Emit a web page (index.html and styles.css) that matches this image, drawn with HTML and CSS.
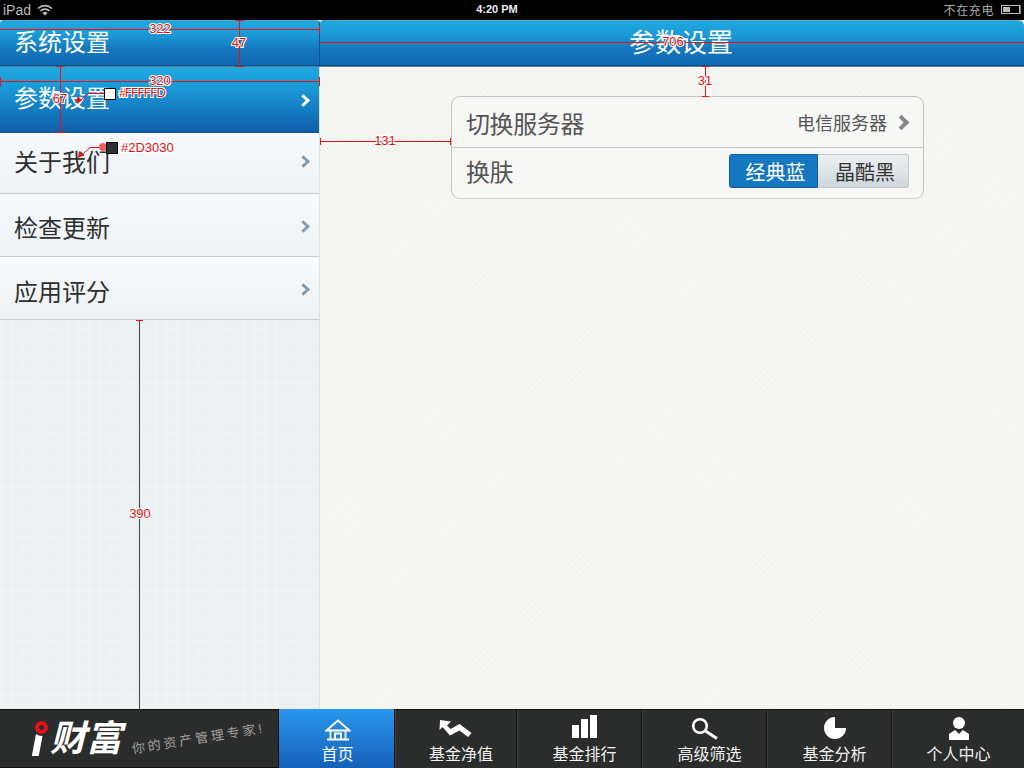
FILE: index.html
```html
<!DOCTYPE html>
<html lang="zh-CN">
<head>
    <meta charset="UTF-8">
    <title>参数设置</title>
    <link rel="stylesheet" href="styles.css">
</head>
<body>
<div class="status-bar">
    <div class="status-left">
        <span>iPad</span>
        <svg class="wifi" width="16" height="12" viewBox="0 0 16 12">
            <path d="M1 4.500a10 10 0 0 1 14 0M3.400 7a6.600 6.600 0 0 1 9.200 0" fill="none" stroke="#bbb" stroke-width="1.600"/>
            <path d="M5.400 9a3.600 3.600 0 0 1 5.200 0L8 11.600z" fill="#bbb"/>
        </svg>
    </div>
    <div class="status-time">4:20 PM</div>
    <div class="status-right">
        <span>不在充电</span>
        <span class="battery"><span class="battery-level"></span></span>
    </div>
</div>

<div class="app">
    <div class="sidebar">
        <div class="bar bar-left">系统设置</div>
        <ul class="menu">
            <li class="menu-item active">参数设置<span class="chevron"></span></li>
            <li class="menu-item">关于我们<span class="chevron"></span></li>
            <li class="menu-item">检查更新<span class="chevron"></span></li>
            <li class="menu-item">应用评分<span class="chevron"></span></li>
        </ul>
    </div>
    <div class="content">
        <div class="bar bar-right">参数设置</div>
        <div class="panel">
            <div class="row row-server">
                <span class="row-title">切换服务器</span>
                <span class="row-value">电信服务器<span class="chevron chevron-grey"></span></span>
            </div>
            <div class="row row-skin">
                <span class="row-title">换肤</span>
                <div class="segment">
                    <span class="segment-item selected">经典蓝</span>
                    <span class="segment-item">晶酷黑</span>
                </div>
            </div>
        </div>
    </div>
</div>

<div class="tabbar">
    <div class="logo">
        <span class="logo-i">i</span>
        <span class="logo-mark">财富</span>
        <span class="logo-dot"></span>
        <span class="logo-slogan">你的资产管理专家!</span>
    </div>
    <div class="tab tab-home">
        <svg width="26" height="22" viewBox="0 0 26 22">
            <path d="M1.500 11.500 13 1.500 24.500 11.500zM5.500 11.500v9M20.500 11.500v9M2 20.500h22M10 14v6M16 14v6M9 14.500h8" fill="none" stroke="#fff" stroke-width="1.800"/>
        </svg>
        <span>首页</span>
    </div>
    <div class="tab tab-nav">
        <svg width="34" height="20" viewBox="0 0 34 20">
            <path d="M1 0l11 1.500-4 4 3.500 3.500 9-5 12 9-3.500 4-8.500-6.500-9.500 5-7.500-8.500-3 3z" fill="#fff"/>
        </svg>
        <span class="tab-label">基金净值</span>
    </div>
    <div class="tab tab-nav tab-rank">
        <svg width="26" height="24" viewBox="0 0 26 24">
            <path d="M1 10h7v13H1zM10 4h7v19h-7zM19 0h7v23h-7z" fill="#fff"/>
        </svg>
        <span class="tab-label">基金排行</span>
    </div>
    <div class="tab tab-nav">
        <svg width="28" height="24" viewBox="0 0 28 24">
            <circle cx="9" cy="10" r="6.800" fill="none" stroke="#fff" stroke-width="2.600"/>
            <path d="m14.500 15 11.500 7.500" stroke="#fff" stroke-width="3"/>
        </svg>
        <span class="tab-label">高级筛选</span>
    </div>
    <div class="tab tab-nav tab-pie">
        <svg width="24" height="24" viewBox="0 0 24 24">
            <path d="M12 1V12H23A11 11 0 1 1 12 1z" fill="#fff"/>
        </svg>
        <span class="tab-label">基金分析</span>
    </div>
    <div class="tab tab-nav tab-last">
        <svg width="22" height="24" viewBox="0 0 22 24">
            <circle cx="11" cy="7" r="6" fill="#fff"/>
            <path d="M1 24v-6l6-4 4 4 4-4 6 4v6z" fill="#fff"/>
        </svg>
        <span>个人中心</span>
    </div>
</div>

<!-- measure marks drawn on top of the design -->
<svg class="marks" width="1024" height="768" viewBox="0 0 1024 768">
    <g class="mark-line">
        <path d="M0 29.500h319M319.500 25v9"/>
        <path d="M239.500 20v46M235 20.500h9M235 66.500h9"/>
        <path d="M320 42.500h704"/>
        <path d="M705.500 66v31M702 66.500h7M702 96.500h7"/>
        <path d="M0 81.500h319M.5 77v9M319.500 77v9"/>
        <path d="M60.500 66v66M56 66.500h9M56 132.500h9"/>
        <path d="M320 141.500h131M320.500 138v7M450.500 138v7"/>
        <path d="M136 320.500h7"/>
        <path d="M104 93.500H88l-10 9"/>
        <path d="M103 147.500H90l-10 9"/>
    </g>
    <path class="mark-dark" d="M139.500 321v388"/>
    <path class="mark-fill" d="m75 103 3-7 4 5zM78 158l1-7 5 4z"/>
    <circle class="mark-dot" cx="103" cy="147" r="4"/>
    <rect class="swatch" x="104.500" y="88.500" width="11" height="11" fill="#fffffd"/>
    <rect class="swatch" x="106.500" y="142.500" width="11" height="11" fill="#2d3030"/>
    <text class="mark-text" x="160" y="33">322</text>
    <text class="mark-text" x="239" y="47">47</text>
    <text class="mark-text" x="673" y="46">706</text>
    <text class="mark-text" x="705" y="85">31</text>
    <text class="mark-text" x="160" y="85">320</text>
    <text class="mark-text" x="60" y="103">67</text>
    <text class="mark-text" x="385" y="145">131</text>
    <text class="mark-text" x="140" y="518">390</text>
    <text class="mark-text mark-hex" x="119" y="97" textLength="47">#FFFFFD</text>
    <text class="mark-text mark-hex" x="121" y="152">#2D3030</text>
</svg>
</body>
</html>
```

FILE: styles.css
```css
* {
    box-sizing: border-box;
}

html, body {
    margin: 0;
    padding: 0;
}

body {
    position: relative;
    width: 1024px;
    height: 768px;
    overflow: hidden;
    font-family: "Liberation Sans", "Noto Sans CJK SC", sans-serif;
    background: #000;
}

/* Status bar */
.status-bar {
    display: flex;
    align-items: center;
    justify-content: space-between;
    position: relative;
    height: 20px;
    padding: 0 4px 1px 3px;
    background: #000;
    color: #bbb;
}

.status-left {
    display: flex;
    align-items: center;
    gap: 6px;
    font-size: 14px;
}

.status-time {
    position: absolute;
    left: 0;
    right: 30px;
    top: 3px;
    text-align: center;
    font-size: 11px;
    font-weight: bold;
    color: #eee;
}

.status-right {
    display: flex;
    align-items: center;
    gap: 7px;
    font-size: 12px;
    letter-spacing: 0.6px;
    color: #aaa;
}

.battery {
    display: block;
    width: 19px;
    height: 9px;
    padding: 1px;
    border: 1px solid #bbb;
    box-shadow: 1px 0 0 #777;
}

.battery-level {
    display: block;
    width: 7px;
    height: 5px;
    background: #bbb;
}

/* Main layout */
.app {
    display: flex;
    height: 689px;
}

.sidebar {
    display: flex;
    flex-direction: column;
    width: 320px;
    background-color: #ebf0f2;
    background-image:
        repeating-linear-gradient(90deg, rgba(255, 255, 255, 0.12) 0 3px, transparent 3px 11px),
        repeating-linear-gradient(0deg, rgba(255, 255, 255, 0.1) 0 4px, transparent 4px 13px);
    border-right: 1px solid #dfe3e5;
}

.content {
    flex: 1;
    background-color: #f5f5f1;
    background-image:
        repeating-linear-gradient(45deg, rgba(255, 255, 255, 0.18) 0 1px, transparent 1px 4px),
        repeating-linear-gradient(-45deg, rgba(225, 225, 215, 0.1) 0 1px, transparent 1px 4px);
}

/* Blue title bars */
.bar {
    height: 47px;
    border-top: 1px solid #43a9d1;
    border-bottom: 1px solid #5f7c8c;
    border-radius: 4px 4px 0 0;
    background: linear-gradient(#1fa9df, #1c9ad7 30%, #1478bf 62%, #0f67b1);
    box-shadow: inset 0 -1px 0 #0b4f8e;
    color: #fff;
    font-size: 24px;
    line-height: 44px;
}

.bar-left {
    width: 320px;
    margin-right: -1px;
    padding-left: 14px;
    border-right: 1px solid #0b4f8e;
}

.bar-right {
    border-radius: 4px 6px 0 0;
    text-align: center;
    padding-left: 18px;
    font-size: 26px;
}

/* Left menu */
.menu {
    margin: 0;
    padding: 0;
    list-style: none;
}

.menu-item {
    display: flex;
    align-items: center;
    justify-content: space-between;
    height: 63px;
    padding: 5px 11px 0 14px;
    border-bottom: 1px solid #c9ced2;
    background: linear-gradient(#f8fbfc, #f3f7f9 40%, #eef2f4);
    color: #2d3030;
    font-size: 24px;
}

.menu-item:nth-child(2) {
    height: 61px;
    padding-top: 0;
    padding-bottom: 5px;
}

.menu-item:nth-child(3) {
    padding-top: 3px;
}

.menu-item.active {
    height: 66px;
    padding-top: 0;
    padding-bottom: 6px;
    border-bottom: 1px solid #0b4f8e;
    background: linear-gradient(#1fa9df, #1b97d5 35%, #1478bf 70%, #0f5ea8);
    color: #fffffd;
}

.chevron {
    display: block;
    width: 9px;
    height: 9px;
    margin-top: -1px;
    border-top: 3px solid #7f9db2;
    border-right: 3px solid #7f9db2;
    transform: rotate(45deg);
}

.menu-item:nth-child(2) .chevron {
    margin-top: 1px;
}

.menu-item:nth-child(4) .chevron {
    margin-top: -3px;
}

.active .chevron {
    margin-top: 7px;
    border-color: #fff;
}

/* Settings panel */
.panel {
    width: 473px;
    height: 103px;
    margin: 29px 0 0 131px;
    border: 1px solid #c2c4c4;
    border-bottom-color: #d0d2d2;
    border-radius: 9px;
    background: #f7f7f6;
    color: #555;
}

.row {
    display: flex;
    align-items: center;
    justify-content: space-between;
    padding: 0 14px;
    font-size: 24px;
}

.row-title {
    letter-spacing: -0.4px;
}

.row-server {
    height: 51px;
    border-bottom: 1px solid #c4c4c4;
}

.row-skin {
    height: 50px;
    padding-bottom: 6px;
}

.row-value {
    display: flex;
    align-items: center;
    gap: 9px;
    font-size: 18px;
    color: #555;
}

.chevron-grey {
    width: 11px;
    height: 11px;
    margin: 0 2px 0 0;
    border-top-width: 4px;
    border-right-width: 4px;
    border-color: #888;
}

.segment {
    display: flex;
    height: 34px;
    margin-top: 2px;
}

.segment-item {
    display: flex;
    align-items: center;
    justify-content: center;
    width: 91px;
    padding-left: 4px;
    border: 1px solid #c2c8cc;
    border-left: 0;
    border-radius: 0 3px 3px 0;
    background: linear-gradient(#eef1f3, #cfd6db);
    font-size: 20px;
    color: #333;
}

.segment-item.selected {
    width: 89px;
    border: 1px solid #0e5ea5;
    border-radius: 3px 0 0 3px;
    background: #1577bf;
    color: #fff;
}

/* Bottom tabs */
.tabbar {
    display: flex;
    height: 59px;
    border-top: 1px solid #111;
    background: #2b2c2c;
    color: #f2f2f2;
}

.logo {
    position: relative;
    width: 279px;
    border-right: 1px solid #111;
    border-bottom: 1px solid #111;
}

.logo-i {
    position: absolute;
    left: 31px;
    top: 4px;
    font-size: 50px;
    line-height: 50px;
    font-weight: bold;
    font-style: italic;
    color: #fff;
}

.logo-mark {
    position: absolute;
    left: 50px;
    top: 8px;
    font-size: 36px;
    line-height: 42px;
    font-weight: bold;
    font-style: italic;
    color: #fff;
}

.logo-dot {
    position: absolute;
    left: 35px;
    top: 11px;
    width: 13px;
    height: 13px;
    border: 4px solid #e60d1c;
    border-radius: 50%;
    background: #2b2c2c;
    box-shadow: 0 0 0 2px #2b2c2c;
}

.logo-slogan {
    position: absolute;
    left: 131px;
    top: 18px;
    font-size: 13px;
    letter-spacing: 3px;
    color: #a0a0a0;
    transform: rotate(-9deg);
}

.tab {
    display: flex;
    flex-direction: column;
    align-items: center;
    justify-content: flex-end;
    gap: 5px;
    height: 58px;
    font-size: 16px;
    line-height: 20px;
    padding-bottom: 3px;
    border-right: 1px solid #111;
}

.tab-label {
    padding-left: 10px;
}

.tab-home {
    width: 116px;
    height: 59px;
    margin-top: -1px;
    background: linear-gradient(#2b97ee, #1560b8);
    color: #fff;
}

.tab-home svg {
    margin: 0 0 -1px 3px;
}

.tab-home span {
    padding-left: 2px;
}

.tab-nav {
    width: 125px;
    border-left: 1px solid #3c3d3d;
}

.tab-nav:nth-child(3) {
    width: 122px;
}

.tab-rank svg {
    margin: 0 0 1px 8px;
}

.tab-pie svg {
    margin-left: 11px;
}

.tab-last {
    flex: 1;
    border-right: 0;
}

/* Measure marks */
.marks {
    position: absolute;
    left: 0;
    top: 0;
}

.mark-line {
    fill: none;
    stroke: #f01010;
    stroke-width: 1;
}

.mark-dark {
    stroke: #444;
}

.mark-fill {
    fill: #f01010;
}

.mark-dot {
    fill: #f06060;
}

.swatch {
    stroke: #000;
}

.mark-text {
    font-family: "Liberation Sans", sans-serif;
    font-size: 13px;
    text-anchor: middle;
    fill: #e01010;
    paint-order: stroke;
    stroke: #fff;
    stroke-width: 2px;
}

.mark-hex {
    text-anchor: start;
}
```
